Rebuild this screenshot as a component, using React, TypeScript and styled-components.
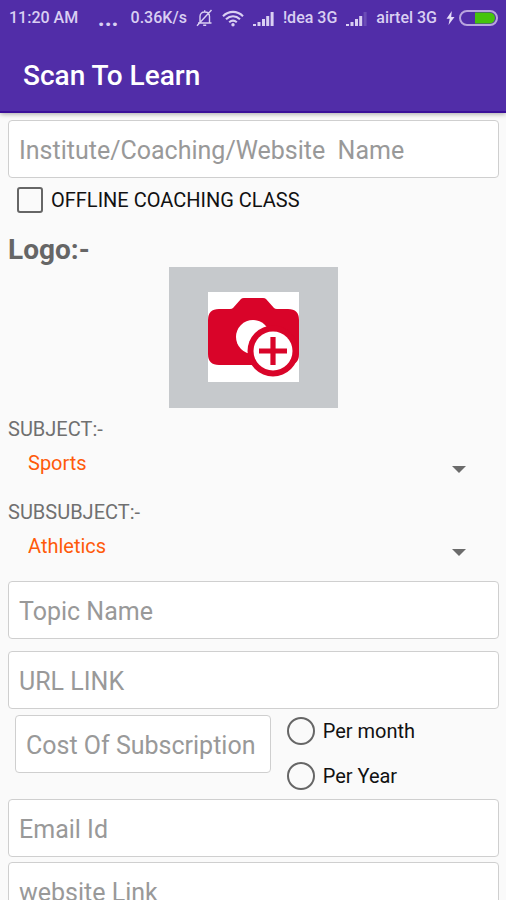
import React, { useId } from "react";
import styled, { createGlobalStyle } from "styled-components";

const GlobalStyle = createGlobalStyle`
  *, *::before, *::after { box-sizing: border-box; }
  html { scrollbar-width: none; }
  body {
    margin: 0;
    background: #fafafa;
    font-family: Roboto, "Liberation Sans", sans-serif;
  }
`;

const Header = styled.header`
  background: #512da8;
  border-bottom: 2px solid #3a0f99;
  box-shadow: 0 1px 5px rgba(0, 0, 0, 0.35);
`;

const StatusBar = styled.div`
  display: flex;
  align-items: center;
  justify-content: space-between;
  height: 36px;
  padding: 0 8px 0 9px;
  color: #d9cff2;
  font-size: 16px;
  font-weight: 500;
  line-height: 20px;
  white-space: nowrap;
`;

const StatusGroup = styled.div`
  display: flex;
  align-items: center;
  gap: 9px;
`;

const PowerGroup = styled(StatusGroup)`
  gap: 4px;
`;

const Title = styled.h1`
  display: flex;
  align-items: center;
  height: 75px;
  margin: 0;
  padding: 4px 23px 0;
  color: #fff;
  font-size: 28px;
  font-weight: 500;
  line-height: 32px;
`;

const Form = styled.form`
  display: flex;
  flex-direction: column;
  padding: 7px 7px 0 8px;
`;

const Field = styled.input<{ $gap?: number }>`
  width: 100%;
  height: 58px;
  margin: 0 0 ${(p) => p.$gap ?? 0}px;
  padding: 2px 10px 0;
  border: 1px solid #cfcfcf;
  border-radius: 4px;
  background: #fff;
  color: #212121;
  font: 400 25px/30px Roboto, "Liberation Sans", sans-serif;
  outline-color: #512da8;

  &::placeholder {
    color: #999;
    opacity: 1;
  }
`;

const Choice = styled.label`
  display: flex;
  align-items: center;
  gap: 8px;
  color: #111;
  font-size: 20px;
  line-height: 24px;
`;

const CheckChoice = styled(Choice)`
  height: 44px;
  padding-left: 9px;
`;

const Tick = styled.input`
  appearance: none;
  flex: none;
  width: 26px;
  height: 26px;
  margin: 0;
  border: 2px solid #666;
  border-radius: 3px;

  &:checked {
    background: #512da8;
    box-shadow: inset 0 0 0 3px #fafafa;
  }
`;

const Radio = styled(Tick)`
  width: 28px;
  height: 28px;
  border-radius: 50%;
`;

const LogoHeading = styled.h2`
  margin: 11px 0 0;
  color: #666;
  font-size: 28px;
  font-weight: 700;
  line-height: 34px;
`;

const LogoButton = styled.button`
  display: flex;
  align-items: flex-start;
  justify-content: center;
  align-self: center;
  width: 169px;
  height: 141px;
  margin: 0 0 9px;
  padding: 25px 0 0;
  border: 0;
  background: #c6c9cc;
`;

const SelectGroup = styled.div<{ $gap: number }>`
  display: flex;
  flex-direction: column;
  margin-bottom: ${(p) => p.$gap}px;
`;

const SelectLabel = styled.label`
  color: #707070;
  font-size: 20px;
  line-height: 24px;
`;

const SelectBox = styled.div`
  display: grid;
  align-items: center;
  grid-template-columns: 1fr 14px;
  padding-right: 33px;
  height: 44px;

  svg {
    grid-area: 1 / 2;
    align-self: end;
    margin-bottom: 12px;
    pointer-events: none;
  }
`;

const Select = styled.select`
  appearance: none;
  grid-area: 1 / 1 / 2 / 3;
  height: 44px;
  padding: 0 20px;
  border: 0;
  background: transparent;
  color: #ff5a0a;
  font: 400 20px/24px Roboto, "Liberation Sans", sans-serif;
`;

const CostRow = styled.div`
  display: flex;
  align-items: flex-start;
  margin-bottom: 2px;
  gap: 16px;
`;

const CostCell = styled.div`
  width: 53.5%;
  padding-left: 7px;
`;

const RadioList = styled.fieldset`
  display: flex;
  flex-direction: column;
  gap: 17px;
  min-width: 0;
  margin: 0;
  padding: 2px 0 7px;
  border: 0;
`;

const MoreDots = styled.span`
  font-size: 24px;
  font-weight: 700;
  line-height: 20px;
  padding-right: 3px;
`;

function MutedBell() {
  return (
    <svg width="17" height="18" viewBox="0 0 17 18" fill="none" stroke="#d9cff2" strokeWidth="1.4" aria-hidden="true">
      <path d="M4 13.500V7.500C4 4.700 5.800 3 8.700 3S13.500 4.700 13.500 7.500v6M2 14h13.500M7.200 16.300h3M8.700 1.200v2M15.500 1 1 16.800" />
    </svg>
  );
}

function Wifi() {
  return (
    <svg width="22" height="17" viewBox="0 0 22 17" fill="none" stroke="#d9cff2" strokeWidth="2.1" aria-hidden="true">
      <path d="M1 6.2C6.8.4 15.2.4 21 6.2M4 9.3c4.2-4 9.8-4 14 0M7.2 12.3c2.3-2.1 5.3-2.1 7.6 0" />
      <circle cx="11" cy="14.7" r="1.7" fill="#d9cff2" stroke="none" />
    </svg>
  );
}

function Signal({ weak = false }: { weak?: boolean }) {
  return (
    <svg width="21" height="15" viewBox="0 0 21 15" fill="#d9cff2" aria-hidden="true">
      <rect x="0" y="13" width="3" height="2" />
      <rect x="4.5" y="11" width="3" height="4" />
      <rect x="9" y="8" width="3" height="7" />
      <rect x="13.2" y="5" width="3" height="10" />
      <rect x="17.6" y="1" width="3" height="14" opacity={weak ? 0.2 : 1} />
    </svg>
  );
}

function Bolt() {
  return (
    <svg width="9" height="14" viewBox="0 0 9 14" fill="#e4dcf7" aria-hidden="true">
      <path d="M5.8 0 .5 7.7h3.2L2.5 14l6-8H5.2z" />
    </svg>
  );
}

function Battery() {
  return (
    <svg width="39" height="16" viewBox="0 0 39 16" aria-hidden="true">
      <path d="M16 2.5h14.5a5.5 5.5 0 0 1 0 11H16z" fill="#45c40c" />
      <rect x="1" y="1" width="37" height="14" rx="7" fill="none" stroke="#b9a5df" strokeWidth="2" />
    </svg>
  );
}

function CameraPlus() {
  return (
    <svg width="91" height="90" viewBox="0 0 91 90" aria-hidden="true">
      <rect width="91" height="90" fill="#fff" />
      <path
        d="M11 17h11q2 0 3-1l8-9q1-1 3-1h19q2 0 3 1l8 9q1 1 3 1h11q11 0 11 11v34q0 11-11 11H11Q0 73 0 62V28q0-11 11-11z"
        fill="#d90429"
      />
      <circle cx="45" cy="45" r="17" fill="#fff" />
      <circle cx="65" cy="59" r="25.500" fill="#d90429" />
      <circle cx="65" cy="59" r="19.500" fill="#fff" />
      <path d="M65 45v28M51 59h28" stroke="#d90429" strokeWidth="5.200" />
    </svg>
  );
}

function Dropdown({ label, options, gap }: { label: string; options: string[]; gap: number }) {
  const id = useId();
  return (
    <SelectGroup $gap={gap}>
      <SelectLabel htmlFor={id}>{label}</SelectLabel>
      <SelectBox>
        <Select id={id}>
          {options.map((option) => (
            <option key={option}>{option}</option>
          ))}
        </Select>
        <svg width="14" height="7" viewBox="0 0 14 7" aria-hidden="true">
          <path d="M0 0h14L7 7z" fill="#6b6b6b" />
        </svg>
      </SelectBox>
    </SelectGroup>
  );
}

function TextField({ name, type = "text", gap }: { name: string; type?: string; gap?: number }) {
  return <Field type={type} placeholder={name} aria-label={name} $gap={gap} />;
}

export default function App() {
  return (
    <>
      <GlobalStyle />
      <Header>
        <StatusBar>
          <span>11:20 AM</span>
          <StatusGroup>
            <MoreDots>...</MoreDots>
            <span>0.36K/s</span>
            <MutedBell />
            <Wifi />
            <Signal />
            <span>!dea 3G</span>
            <Signal weak />
            <span>airtel 3G</span>
            <PowerGroup>
              <Bolt />
              <Battery />
            </PowerGroup>
          </StatusGroup>
        </StatusBar>
        <Title>Scan To Learn</Title>
      </Header>
      <Form>
        <TextField name="Institute/Coaching/Website  Name" />
        <CheckChoice>
          <Tick type="checkbox" />
          OFFLINE COACHING CLASS
        </CheckChoice>
        <LogoHeading>Logo:-</LogoHeading>
        <LogoButton type="button" aria-label="Add logo">
          <CameraPlus />
        </LogoButton>
        <Dropdown label="SUBJECT:-" options={["Sports"]} gap={15} />
        <Dropdown label="SUBSUBJECT:-" options={["Athletics"]} gap={13} />
        <TextField name="Topic Name" gap={12} />
        <TextField name="URL LINK" type="url" gap={6} />
        <CostRow>
          <CostCell>
            <TextField name="Cost Of Subscription" />
          </CostCell>
          <RadioList aria-label="Billing period">
            <Choice>
              <Radio type="radio" name="period" />
              Per month
            </Choice>
            <Choice>
              <Radio type="radio" name="period" />
              Per Year
            </Choice>
          </RadioList>
        </CostRow>
        <TextField name="Email Id" type="email" gap={5} />
        <TextField name="website Link" type="url" />
      </Form>
    </>
  );
}
